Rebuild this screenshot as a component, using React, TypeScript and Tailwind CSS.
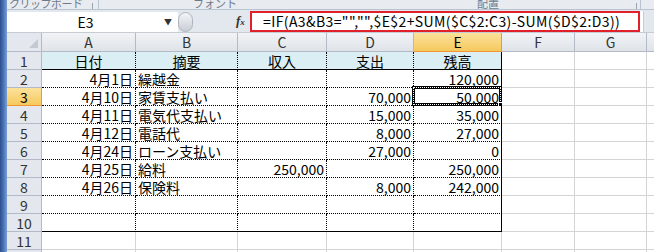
import React from 'react';

const FONT = '"Noto Sans CJK JP", "Liberation Sans", sans-serif';

const colNames = ['A', 'B', 'C', 'D', 'E', 'F', 'G', 'H'];
const colWidths = ['w-[94px]', 'w-[102px]', 'w-[89px]', 'w-[87px]', 'w-[88px]', 'w-[73px]', 'w-[72px]', 'w-[40px]'];

const rows: string[][] = [
  ['日付', '摘要', '収入', '支出', '残高'],
  ['4月1日', '繰越金', '', '', '120,000'],
  ['4月10日', '家賃支払い', '', '70,000', '50,000'],
  ['4月11日', '電気代支払い', '', '15,000', '35,000'],
  ['4月12日', '電話代', '', '8,000', '27,000'],
  ['4月24日', 'ローン支払い', '', '27,000', '0'],
  ['4月25日', '給料', '250,000', '', '250,000'],
  ['4月26日', '保険料', '', '8,000', '242,000'],
  [],
  [],
  [],
  [],
];

function Cell({ r, c, value }: { r: number; c: number; value: string }) {
  const inTable = r <= 10 && c <= 4;
  const right = inTable
    ? c === 4
      ? 'border-r border-r-black'
      : 'border-r border-r-black [border-right-style:dotted]'
    : 'border-r border-r-[#d4d4d4]';
  const bottom = inTable
    ? r === 1 || r === 10
      ? 'border-b border-b-black'
      : 'border-b border-b-black [border-bottom-style:dotted]'
    : 'border-b border-b-[#d4d4d4]';
  const bg = r === 1 && c <= 4 ? 'bg-[#daeef3]' : 'bg-white';
  const align = r === 1 ? 'justify-center' : c === 1 ? 'justify-start pl-[2px]' : 'justify-end pr-[2px]';
  const selected = r === 3 && c === 4;
  return (
    <div className={`relative flex items-end shrink-0 h-[18px] ${colWidths[c]} ${right} ${bottom} ${bg} ${align}`}>
      {value && <span className="text-[14px] leading-[16px] text-black whitespace-nowrap">{value}</span>}
      {selected && (
        <div className="absolute -left-[2px] -top-[2px] -right-[1px] -bottom-[1px] border-[3px] border-black">
          <div className="absolute -inset-[2px] border border-dotted border-white" />
          <div className="absolute -right-[5px] -bottom-[5px] w-[6px] h-[6px] bg-black border border-white" />
        </div>
      )}
    </div>
  );
}

export default function App() {
  return (
    <div className="w-[654px] h-[252px] overflow-hidden flex bg-[#dfe4ea]" style={{ fontFamily: FONT }}>
      <div className="w-[7px] shrink-0 bg-gradient-to-r from-[#2c4f8c] via-[#4a74b8] to-[#7b9fd4]" />
      <div className="flex-1 flex flex-col min-w-0">
        {/* ribbon group labels, cut off at the top */}
        <div className="h-[10px] shrink-0 flex items-end overflow-hidden bg-[#e8ecf1] border-b border-[#b9c4d3] text-[11px] leading-[14px] text-[#6f7a89] whitespace-nowrap">
          <div className="w-[80px] shrink-0 pl-[2px] -mb-[1px] tracking-[-0.5px]">クリップボード</div>
          <div className="w-[6px] h-[6px] border-r border-[#9aa4b2]" />
          <div className="w-[6px] h-[10px] border-r border-[#b9c4d3]" />
          <div className="w-[94px]" />
          <div className="-mb-[1px]">フォント</div>
          <div className="w-[240px]" />
          <div className="-mb-[1px]">配置</div>
          <div className="w-[132px]" />
          <div className="w-[6px] h-[6px] border-r border-[#9aa4b2]" />
          <div className="w-[4px] h-[10px] border-r border-[#b9c4d3]" />
        </div>
        {/* formula bar */}
        <div className="h-[23px] shrink-0 flex items-center bg-[#e3e8ee] border-b border-[#c6ccd4]">
          <div className="w-[171px] h-[20px] mt-[1px] bg-white flex items-center">
            <span className="flex-1 text-center text-[14px] leading-[18px]">E3</span>
            <span className="w-[14px] text-[8px] text-[#333] leading-none">▼</span>
          </div>
          <div className="w-[15px] h-[20px] mt-[1px] rounded-full bg-gradient-to-b from-[#f4f6f8] to-[#c9ced5] border border-[#aeb5be]" />
          <div className="w-[43px]" />
          <span className="text-[13px] italic font-bold text-[#333] w-[14px]" style={{ fontFamily: '"Liberation Serif", serif' }}>
            f<span className="text-[9px]">x</span>
          </span>
          <div className="w-[390px] h-[21px] mt-[1px] bg-white border-2 border-[#e0202b] flex items-center">
            <span className="text-[14px] leading-[17px] pl-[11px] whitespace-nowrap tracking-[0.4px]">
              =IF(A3&amp;B3="","",$E$2+SUM($C$2:C3)-SUM($D$2:D3))
            </span>
          </div>
          <div className="w-[4px] h-[21px] bg-white border-r border-[#c6ccd4]" />
        </div>
        {/* column headers */}
        <div className="flex h-[19px] shrink-0">
          <div className="w-[35px] shrink-0 bg-[#e4e8ee] border-r border-b border-[#b1bac6] relative">
            <div className="absolute right-[3px] bottom-[3px] w-0 h-0 border-l-[9px] border-l-transparent border-b-[9px] border-b-[#c3c9d1]" />
          </div>
          {colNames.map((n, i) => (
            <div
              key={n}
              className={`shrink-0 ${colWidths[i]} flex items-end justify-center border-r border-b text-[14px] leading-[17px] ${
                i === 4
                  ? 'bg-gradient-to-b from-[#fbe29a] to-[#f6c95c] border-[#f29536] text-black'
                  : 'bg-gradient-to-b from-[#f1f3f6] to-[#dfe3e8] border-[#b1bac6] text-[#333]'
              }`}
            >
              {n}
            </div>
          ))}
        </div>
        {/* rows */}
        {rows.map((row, ri) => {
          const r = ri + 1;
          return (
            <div key={r} className="flex shrink-0">
              <div
                className={`w-[35px] h-[18px] shrink-0 flex items-end justify-center border-r border-b text-[14px] leading-[16px] ${
                  r === 3
                    ? 'bg-gradient-to-b from-[#fbe29a] to-[#f6c95c] border-[#f29536] text-black'
                    : 'bg-[#e4e8ee] border-[#b1bac6] text-[#333]'
                }`}
              >
                {r}
              </div>
              {colNames.map((_, ci) => (
                <Cell key={ci} r={r} c={ci} value={row[ci] ?? ''} />
              ))}
            </div>
          );
        })}
      </div>
    </div>
  );
}
